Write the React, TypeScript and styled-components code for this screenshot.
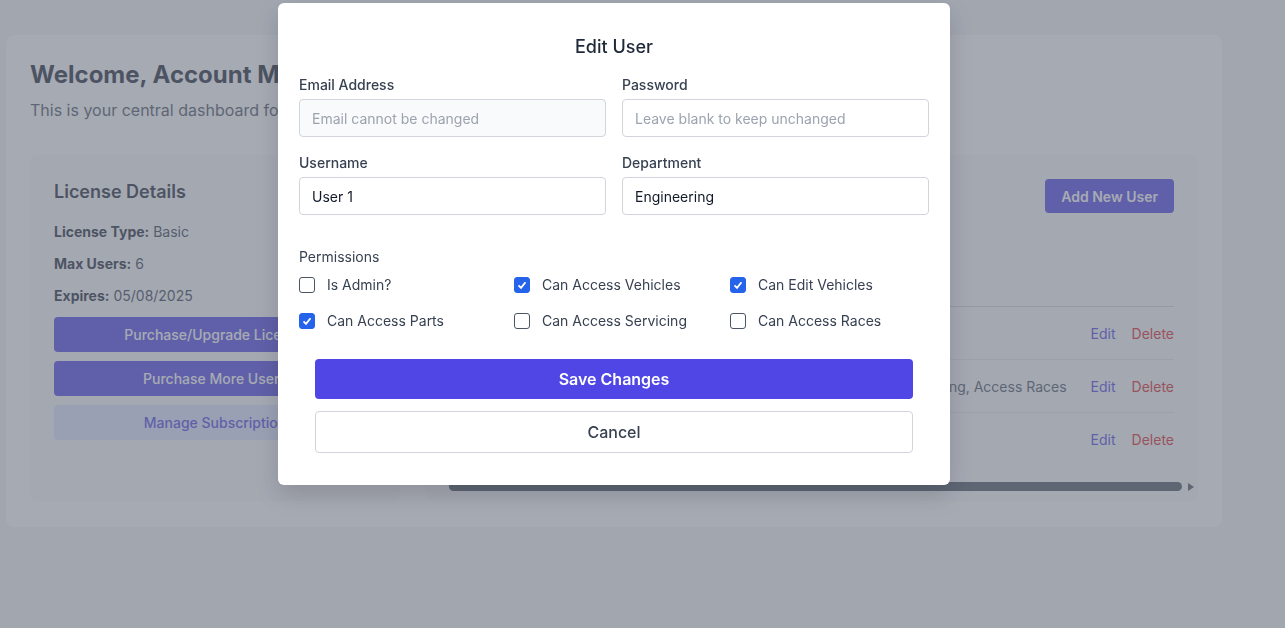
import React from "react";
import styled, { createGlobalStyle } from "styled-components";

const Global = createGlobalStyle`
  html, body { margin: 0; padding: 0; background: #f3f4f6; font-family: Inter, "Noto Sans", sans-serif; }
  * { box-sizing: border-box; }
`;

const Page = styled.div`
  padding: 35px 63px 100px 6px;
  height: 628px;
`;
const Shell = styled.div`
  background: #fff;
  border-radius: 8px;
  padding: 25px 24px 26px 24px;
  width: 1216px;
`;
const H1 = styled.h1`
  margin: 0; font-size: 24px; font-weight: 700; color: #1f2937; line-height: 30px;
`;
const Sub = styled.p`
  margin: 8px 0 0; font-size: 16px; color: #4b5563; line-height: 24px;
`;
const Grid = styled.div`
  display: grid; grid-template-columns: 370px 1fr; gap: 25px; margin-top: 33px;
`;
const Card = styled.div`
  background: #f9fafb; border-radius: 8px; padding: 24px; height: 346px;
`;
const H2 = styled.h2`
  margin: 0 0 16px; font-size: 18px; font-weight: 600; color: #1f2937; line-height: 26px;
`;
const Line = styled.p`
  margin: 0 0 10px; font-size: 14px; color: #374151; line-height: 22px;
  b { font-weight: 700; color: #1f2937; }
`;
const BgBtn = styled.div<{ $light?: boolean }>`
  height: 35px; border-radius: 4px; margin-top: 9px; display: flex; align-items: center; justify-content: center;
  font-size: 14px; font-weight: 500;
  background: ${p => (p.$light ? "#e0e7ff" : "#4f46e5")};
  color: ${p => (p.$light ? "#4f46e5" : "#fff")};
`;
const UsersHead = styled.div`display: flex; justify-content: flex-end;`;
const AddBtn = styled.div`
  background: #4f46e5; color: #fff; font-size: 14px; font-weight: 600; border-radius: 4px;
  padding: 0 16px; height: 34px; display: flex; align-items: center;
`;
const Table = styled.div`margin-top: 93px; border-top: 1px solid #d1d5db;`;
const Row = styled.div`
  height: 53px; border-bottom: 1px solid #e5e7eb; display: flex; align-items: center; justify-content: flex-end;
  gap: 16px; font-size: 14px; &:last-child { border-bottom: none; }
`;
const Perm = styled.span`color: #4b5563; margin-right: 8px;`;
const EditL = styled.span`color: #4f46e5;`;
const DelL = styled.span`color: #dc2626;`;
const ScrollRow = styled.div`display: flex; align-items: center; gap: 6px; margin: 16px -20px 0 0;`;
const Scroll = styled.div`flex: 1; height: 9px; border-radius: 5px; background: #4b5563;`;
const Arrow = styled.div`
  width: 0; height: 0; border-top: 4px solid transparent; border-bottom: 4px solid transparent; border-left: 6px solid #4b5563;
`;

const Overlay = styled.div`
  position: fixed; inset: 0; background: rgba(107, 114, 128, 0.6);
`;
const Modal = styled.div`
  position: fixed; left: 278px; top: 3px; width: 672px; background: #fff; border-radius: 6px;
  padding: 32px 21px 32px 21px; box-shadow: 0 10px 25px rgba(0,0,0,0.15);
`;
const Title = styled.h3`
  margin: 0 0 16px; text-align: center; font-size: 18px; font-weight: 500; color: #1f2937; line-height: 24px;
`;
const Fields = styled.div`display: grid; grid-template-columns: 1fr 1fr; column-gap: 16px; row-gap: 16px;`;
const Field = styled.div`display: flex; flex-direction: column; gap: 4px;`;
const Label = styled.label`font-size: 14px; font-weight: 500; color: #374151; line-height: 20px;`;
const Input = styled.input`
  height: 38px; border: 1px solid #d1d5db; border-radius: 4px; padding: 0 12px; font: inherit; font-size: 14px; color: #111827;
  &:disabled { background: #f9fafb; }
  &::placeholder { color: #9ca3af; }
`;
const PermLabel = styled.div`margin-top: 32px; font-size: 14px; color: #374151; line-height: 20px;`;
const Checks = styled.div`display: grid; grid-template-columns: 215px 216px 1fr; row-gap: 16px; margin-top: 8px;`;
const Check = styled.label`display: flex; align-items: center; gap: 12px; font-size: 14px; color: #374151; line-height: 20px;`;
const Box = styled.span<{ $on: boolean }>`
  width: 16px; height: 16px; border-radius: 3px; display: flex; align-items: center; justify-content: center;
  border: 1px solid ${p => (p.$on ? "#2563eb" : "#4b5563")};
  background: ${p => (p.$on ? "#2563eb" : "#fff")};
`;
const Actions = styled.div`display: flex; flex-direction: column; gap: 12px; margin: 28px 16px 0;`;
const Save = styled.button`
  height: 40px; border: none; border-radius: 4px; background: #4f46e5; color: #fff; font: inherit; font-size: 16px; font-weight: 600;
`;
const Cancel = styled.button`
  height: 42px; border: 1px solid #d1d5db; border-radius: 4px; background: #fff; color: #374151; font: inherit; font-size: 16px; font-weight: 500;
`;

const perms: [string, boolean][] = [
  ["Is Admin?", false], ["Can Access Vehicles", true], ["Can Edit Vehicles", true],
  ["Can Access Parts", true], ["Can Access Servicing", false], ["Can Access Races", false],
];

export default function App() {
  return (
    <>
      <Global />
      <Page>
        <Shell>
          <H1>Welcome, Account Manager</H1>
          <Sub>This is your central dashboard for managing your account.</Sub>
          <Grid>
            <Card>
              <H2>License Details</H2>
              <Line><b>License Type:</b> Basic</Line>
              <Line><b>Max Users:</b> 6</Line>
              <Line><b>Expires:</b> 05/08/2025</Line>
              <BgBtn>Purchase/Upgrade License</BgBtn>
              <BgBtn>Purchase More Users</BgBtn>
              <BgBtn $light>Manage Subscription</BgBtn>
            </Card>
            <Card>
              <UsersHead><AddBtn>Add New User</AddBtn></UsersHead>
              <Table>
                <Row><EditL>Edit</EditL><DelL>Delete</DelL></Row>
                <Row><Perm>Access Servicing, Access Races</Perm><EditL>Edit</EditL><DelL>Delete</DelL></Row>
                <Row><EditL>Edit</EditL><DelL>Delete</DelL></Row>
              </Table>
              <ScrollRow><Scroll /><Arrow /></ScrollRow>
            </Card>
          </Grid>
        </Shell>
      </Page>
      <Overlay />
      <Modal>
        <Title>Edit User</Title>
        <Fields>
          <Field><Label>Email Address</Label><Input disabled placeholder="Email cannot be changed" /></Field>
          <Field><Label>Password</Label><Input placeholder="Leave blank to keep unchanged" /></Field>
          <Field><Label>Username</Label><Input defaultValue="User 1" /></Field>
          <Field><Label>Department</Label><Input defaultValue="Engineering" /></Field>
        </Fields>
        <PermLabel>Permissions</PermLabel>
        <Checks>
          {perms.map(([t, on]) => (
            <Check key={t}>
              <Box $on={on}>
                {on && (
                  <svg width="12" height="12" viewBox="0 0 12 12">
                    <path d="M2.5 6.3 L5 8.8 L9.5 3.2" fill="none" stroke="#fff" strokeWidth="1.8" />
                  </svg>
                )}
              </Box>
              {t}
            </Check>
          ))}
        </Checks>
        <Actions>
          <Save>Save Changes</Save>
          <Cancel>Cancel</Cancel>
        </Actions>
      </Modal>
    </>
  );
}
